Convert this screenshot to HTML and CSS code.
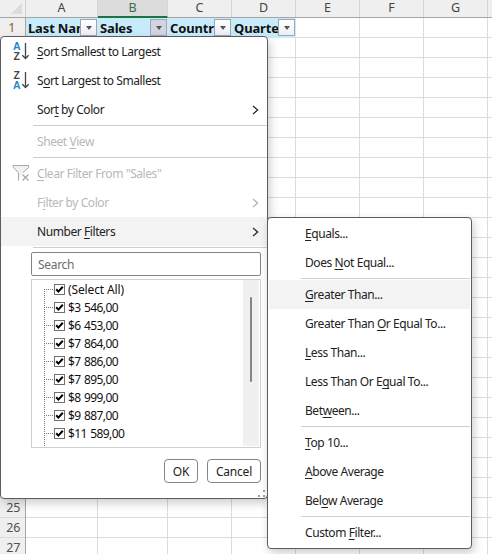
FILE: index.html
```html
<!DOCTYPE html>
<html lang="en">
<head>
<meta charset="utf-8">
<title>Number Filters</title>
<link rel="stylesheet" href="styles.css">
</head>
<body>
<div class="sheet">
  <div class="col-heads">
    <div class="corner"><svg width="25" height="17"><path d="M22 3V14H11Z" fill="#dcdcdc"/></svg></div>
    <div class="ch ca">A</div><div class="ch cb selected">B</div><div class="ch">C</div><div class="ch">D</div><div class="ch">E</div><div class="ch">F</div><div class="ch">G</div><div class="ch rest"></div>
  </div>
  <div class="body">
    <div class="row-heads">
      <div class="first">1</div><div>2</div><div>3</div><div>4</div><div>5</div><div>6</div><div>7</div><div>8</div><div>9</div><div>10</div><div>11</div><div>12</div><div>13</div><div>14</div><div>15</div><div>16</div><div>17</div><div>18</div><div>19</div><div>20</div><div>21</div><div>22</div><div>23</div><div>24</div><div>25</div><div>26</div><div>27</div>
    </div>
    <div class="col ca"><div class="cell"><span>Last Name</span><i class="dd"></i></div></div>
    <div class="col cb"><div class="cell"><span>Sales</span><i class="dd active"></i></div></div>
    <div class="col"><div class="cell"><span>Country</span><i class="dd"></i></div></div>
    <div class="col"><div class="cell"><span>Quarter</span><i class="dd"></i></div></div>
    <div class="col"></div><div class="col"></div><div class="col"></div><div class="col rest"></div>
  </div>
</div>

<div class="menu main">
  <div class="item"><svg class="ico" width="18" height="18" viewBox="0 0 18 18"><text class="g blue" x="1" y="8">A</text><text class="g" x="1.4" y="17.5">Z</text><path class="arrow" d="M13.5 1V16.5M10.3 13.3L13.5 16.5L16.7 13.3"/></svg><span><u>S</u>ort Smallest to Largest</span></div>
  <div class="item"><svg class="ico" width="18" height="18" viewBox="0 0 18 18"><text class="g" x="1.4" y="8">Z</text><text class="g blue" x="1" y="17.5">A</text><path class="arrow" d="M13.5 1V16.5M10.3 13.3L13.5 16.5L16.7 13.3"/></svg><span>S<u>o</u>rt Largest to Smallest</span></div>
  <div class="item"><span>Sor<u>t</u> by Color</span><svg class="chev" width="8" height="10"><path d="M1 1L5.7 5L1 9"/></svg></div>
  <div class="sep"></div>
  <div class="item off"><span>Sheet <u>V</u>iew</span></div>
  <div class="sep"></div>
  <div class="item off"><svg class="ico" width="18" height="18" viewBox="0 0 18 18"><path class="funnel" d="M6.5 16.5V8.5L1.2 3.5V1.5H16.6V3.5L11 8.5"/><path class="x" d="M10.5 10.5L16.5 16.5M16.5 10.5L10.5 16.5"/></svg><span><u>C</u>lear Filter From "Sales"</span></div>
  <div class="item off"><span>F<u>i</u>lter by Color</span><svg class="chev" width="8" height="10"><path d="M1 1L5.7 5L1 9"/></svg></div>
  <div class="item hot"><span>Number <u>F</u>ilters</span><svg class="chev" width="8" height="10"><path d="M1 1L5.7 5L1 9"/></svg></div>
  <div class="sep"></div>
  <div class="search">Search</div>
  <div class="list">
    <div class="tree">
      <div class="node all"><i class="box"><svg width="9" height="9"><path d="M1.2 4.2L3.4 6.6L7.8 1.8"/></svg></i><span>(Select All)</span></div>
      <div class="node"><i class="box"><svg width="9" height="9"><path d="M1.2 4.2L3.4 6.6L7.8 1.8"/></svg></i><span>$3 546,00</span></div>
      <div class="node"><i class="box"><svg width="9" height="9"><path d="M1.2 4.2L3.4 6.6L7.8 1.8"/></svg></i><span>$6 453,00</span></div>
      <div class="node"><i class="box"><svg width="9" height="9"><path d="M1.2 4.2L3.4 6.6L7.8 1.8"/></svg></i><span>$7 864,00</span></div>
      <div class="node"><i class="box"><svg width="9" height="9"><path d="M1.2 4.2L3.4 6.6L7.8 1.8"/></svg></i><span>$7 886,00</span></div>
      <div class="node"><i class="box"><svg width="9" height="9"><path d="M1.2 4.2L3.4 6.6L7.8 1.8"/></svg></i><span>$7 895,00</span></div>
      <div class="node"><i class="box"><svg width="9" height="9"><path d="M1.2 4.2L3.4 6.6L7.8 1.8"/></svg></i><span>$8 999,00</span></div>
      <div class="node"><i class="box"><svg width="9" height="9"><path d="M1.2 4.2L3.4 6.6L7.8 1.8"/></svg></i><span>$9 887,00</span></div>
      <div class="node"><i class="box"><svg width="9" height="9"><path d="M1.2 4.2L3.4 6.6L7.8 1.8"/></svg></i><span>$11 589,00</span></div>
      <div class="node"><i class="box"></i><span>$</span></div>
    </div>
    <div class="track"><div class="thumb"></div></div>
  </div>
  <div class="buttons"><div class="btn ok">OK</div><div class="btn cancel">Cancel</div></div>
  <svg class="grip" width="8" height="8"><path d="M5 0h2v2h-2zM0 5h2v2h-2zM5 5h2v2h-2z" fill="#a0a0a0"/></svg>
</div>

<div class="menu sub">
  <div class="item"><span><u>E</u>quals...</span></div>
  <div class="item"><span>Does <u>N</u>ot Equal...</span></div>
  <div class="sep"></div>
  <div class="item hot"><span><u>G</u>reater Than...</span></div>
  <div class="item"><span>Greater Than <u>O</u>r Equal To...</span></div>
  <div class="item"><span><u>L</u>ess Than...</span></div>
  <div class="item"><span>Less Than Or E<u>q</u>ual To...</span></div>
  <div class="item"><span>Bet<u>w</u>een...</span></div>
  <div class="sep"></div>
  <div class="item"><span><u>T</u>op 10...</span></div>
  <div class="item"><span><u>A</u>bove Average</span></div>
  <div class="item"><span>Bel<u>o</u>w Average</span></div>
  <div class="sep"></div>
  <div class="item"><span>Custom <u>F</u>ilter...</span></div>
</div>
</body>
</html>
```
FILE: styles.css
```css
* { box-sizing: border-box; }
body {
  margin: 0;
  width: 492px;
  height: 554px;
  overflow: hidden;
  position: relative;
  background: #fff;
  font-family: "Noto Sans", "Open Sans", sans-serif;
  font-size: 12px;
  letter-spacing: -0.43px;
  color: #222;
}
i { font-style: normal; }
u { text-underline-offset: 2px; text-decoration-thickness: 1px; text-decoration-skip-ink: none; }

.sheet { width: 492px; height: 554px; overflow: hidden; }
.col-heads { display: flex; height: 18px; background: #efefef; border-bottom: 1px solid #a6a6a6; }
.corner { width: 26px; border-right: 1px solid #d0d0d0; }
.corner svg { display: block; }
.ch { width: 64px; border-right: 1px solid #d6d6d6; text-align: center; line-height: 16px; font-size: 12.5px; letter-spacing: 0; color: #444; }
.ca { width: 72px; }
.cb { width: 70px; }
.ch.selected { height: 18px; background: #dcdcdc; color: #3f6b50; border-bottom: 2px solid #1a7544; }
.body { display: flex; height: 536px; overflow: hidden; }
.row-heads { width: 26px; background: #efefef; border-right: 1px solid #a6a6a6; }
.row-heads div { height: 20px; border-bottom: 1px solid #d9d9d9; line-height: 20px; text-align: right; padding-right: 5px; font-size: 12.5px; letter-spacing: -0.3px; color: #505050; }
.row-heads .first { padding-right: 10px; color: #8a5a30; }
.col { width: 64px; border-right: 1px solid #dcdcdc; background: repeating-linear-gradient(#fff 0 19px, #dcdcdc 19px 20px); }
.col.ca { width: 72px; }
.col.cb { width: 70px; }
.ch.rest, .col.rest { width: 4px; border-right: 0; }
.cell { display: flex; justify-content: space-between; height: 20px; margin-right: -1px; background: #c8ebfb; padding: 1px 1px 0 2px; overflow: hidden; font: 700 13px/19px "Noto Sans", sans-serif; color: #111; letter-spacing: -0.15px; }
.cell span { width: 0; flex: 1; overflow: hidden; white-space: nowrap; }
.dd { width: 17px; height: 17px; border: 1px solid #a2a6b4; background: linear-gradient(#fff, #eceef4); display: flex; align-items: center; justify-content: center; }
.dd.active { background: #d3d4df; }
.dd::after { content: ""; border: 3.5px solid transparent; border-top: 4px solid #555; border-bottom: 0; }

.menu { position: absolute; background: #fff; border: 1px solid #5c5c5c; border-radius: 4px; box-shadow: 2px 4px 10px rgba(0, 0, 0, 0.2); }
.main { left: 0; top: 36px; width: 268px; height: 463px; }
.sub { left: 267px; top: 217px; width: 205px; height: 332px; padding: 1px 1px 0; }
.item { height: 29px; display: flex; align-items: center; white-space: nowrap; padding: 0 7px 0 36px; }
.main .item { position: relative; }
.item span { flex: 1; line-height: 16px; padding-top: 1px; }
.hot { background: #f3f3f3; }
.off { color: #b8b8b8; }
.sep { height: 1px; margin: 1px 0 1px 32px; background: #cecece; }
.ico { position: absolute; left: 11px; top: 5px; overflow: visible; }
.g { font: 700 10.5px "Liberation Sans", sans-serif; letter-spacing: 0; fill: #444; }
.g.blue { fill: #1e88cf; }
.arrow { fill: none; stroke: #444; stroke-width: 1.3; }
.funnel { fill: #f2f2f2; stroke: #a6a6a6; }
.x { fill: none; stroke: #a6a6a6; stroke-width: 1.2; }
.chev { fill: none; stroke: #222; stroke-width: 1.2; }
.off .chev { stroke: #b0b0b0; }
.search { margin: 4px 6px 3px 30px; height: 24px; border: 1px solid #868686; border-radius: 2px; padding-left: 6px; line-height: 23px; letter-spacing: -0.3px; color: #6c6c6c; }
.list { margin: 0 6px 0 30px; height: 169px; border: 1px solid #cfcfcf; display: flex; overflow: hidden; padding-bottom: 1px; }
.tree { flex: 1; height: 166px; overflow: hidden; margin-left: 12px; color: #111; }
.node { display: flex; align-items: center; height: 18px; position: relative; padding-left: 10px; letter-spacing: -0.6px; }
.node.all { letter-spacing: -0.12px; }
.node::before { content: ""; width: 10px; height: 1px; position: absolute; left: 0; top: 9px; background: repeating-linear-gradient(90deg, #777 0 1px, transparent 1px 2px); }
.node::after { content: ""; width: 1px; height: 18px; position: absolute; left: 0; top: 0; background: repeating-linear-gradient(#fff 0 1px, #777 1px 2px); }
.node:first-child::after { top: 9px; height: 9px; background: repeating-linear-gradient(#777 0 1px, #fff 1px 2px); }
.box { width: 11px; height: 11px; border: 1px solid #707070; flex: none; }
.box svg { display: block; fill: none; stroke: #000; stroke-width: 2; }
.node span { margin-left: 3px; line-height: 18px; padding-top: 1px; word-spacing: 1px; }
.node.all span { word-spacing: 0; }
.track { width: 16px; margin-right: 1px; background: #f0f0f0; display: flex; justify-content: center; padding-top: 17px; }
.thumb { width: 2px; height: 85px; background: #858585; border-radius: 1px; }
.buttons { display: flex; justify-content: flex-end; gap: 9px; margin: 11px 6px 0 0; letter-spacing: -0.2px; }
.btn { height: 24px; border: 1px solid #868686; border-radius: 4px; text-align: center; line-height: 23px; }
.ok { width: 34px; }
.cancel { width: 54px; }
.grip { position: absolute; right: 1px; bottom: 0; }
```
